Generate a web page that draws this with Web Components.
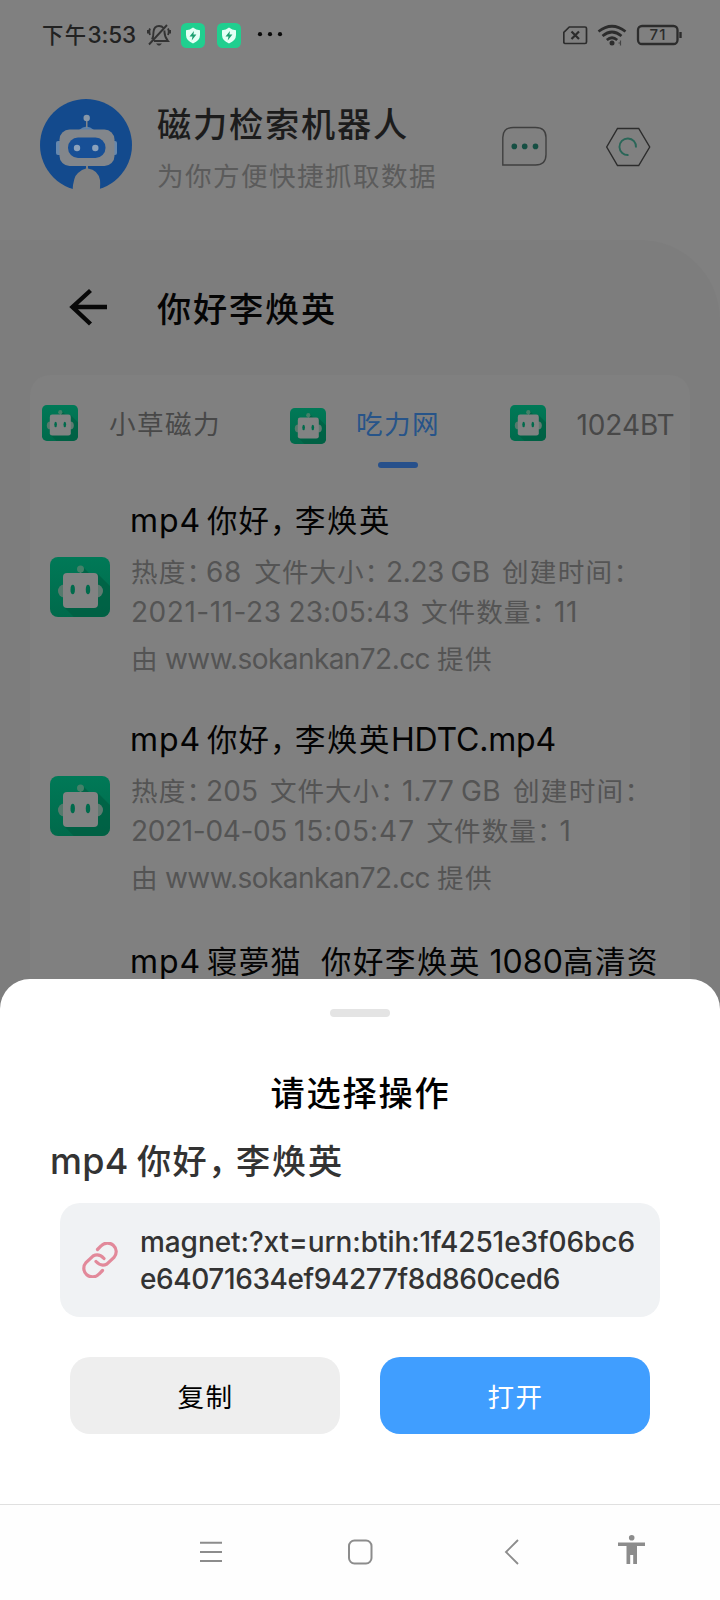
<!DOCTYPE html>
<html lang="zh-CN">
<head>
<meta charset="utf-8">
<title>磁力检索机器人</title>
<style>
html,body{margin:0;padding:0}
body{width:720px;height:1600px;overflow:hidden;background:#808080;font-family:Inter,"Noto Sans CJK SC",sans-serif}
</style>
</head>
<body>
<app-screen></app-screen>
<script>
function define(name, html, init){
  const t=document.createElement('template');
  t.innerHTML=html;
  customElements.define(name,class extends HTMLElement{
    constructor(){super();this.attachShadow({mode:'open'}).appendChild(t.content.cloneNode(true));}
    connectedCallback(){if(init)init(this);}
  });
}

define('app-screen',`<style>
:host{display:grid;width:720px;height:1600px;grid-template:1600px/720px;overflow:hidden}
.page,.front{grid-area:1/1;display:flex;flex-direction:column;min-width:0}
.front{justify-content:flex-end}
.page{overflow:hidden}
</style>
<div class="page"><status-bar></status-bar><app-header></app-header><result-panel></result-panel></div>
<div class="front"><action-sheet></action-sheet><nav-bar></nav-bar></div>`);

define('status-bar',`<style>
:host{display:flex;height:70px;box-sizing:border-box;padding:0 38px 0 42px;align-items:center;color:#222}
.time{font-size:22.5px;line-height:30px;font-weight:500;width:105px;white-space:nowrap;margin-bottom:2px}
svg{display:block;flex:none}
.bell{margin-right:10px}.g{margin-right:12px}.sp{flex:1}
</style>
<div class="time"><t-r c w="45.5">下午</t-r><t-r w="48.5">3:53</t-r></div>
<svg class="bell" width="24" height="24" viewBox="0 0 24 24" fill="none" stroke="#333" stroke-width="1.9"><path d="M5 16.5 Q6.5 14 6.5 9 Q7 3 12 3 Q15 3 16.500 5M17.500 7.500 Q17 13 21 18H7M2 21.500 20 2M3 5.500Q1.700 8.500 3 12M21 5.500Q22.500 8.500 21 12M0.800 7v3.500M23.200 7v3.500"/><path d="M9 20.500h6l-2 2h-2z" fill="#333" stroke="none"/></svg>
<shield-icon class="g"></shield-icon><shield-icon class="g"></shield-icon>
<svg width="30" height="10" viewBox="0 0 30 10" fill="#0c0c0c" style="margin-left:3px"><circle cx="4" cy="4.200" r="2.100"/><circle cx="14" cy="4.200" r="2.100"/><circle cx="24" cy="4.200" r="2.100"/></svg>
<div class="sp"></div>
<svg width="119" height="24" viewBox="0 0 119 24" fill="none" stroke="#2c2c2c"><path d="M6.300 4H22a1.500 1.500 0 0 1 1.500 1.500V19A1.500 1.500 0 0 1 22 20.500H2A1.500 1.500 0 0 1 .8 19V9.500z" stroke-width="1.700"/><path d="m8.500 8.500 7.500 7.500m0-7.500-7.500 7.500" stroke-width="2.200"/><path d="M35.500 8.500Q49-2 62.500 8.500M39.500 13Q49 5 58.500 13M43.800 17Q49 12.500 54.200 17" stroke-width="2.700"/><circle cx="49" cy="20" r="2.500" fill="#2c2c2c" stroke="none"/><path d="M57.500 17.500v5M55.500 20h2" stroke-width="1.200" opacity=".7"/><rect x="75" y="3" width="39.500" height="18" rx="4" stroke-width="2.300"/><path d="M117.500 9v6" stroke-width="2.400"/><text x="94.500" y="17.300" text-anchor="middle" font-family="Inter,sans-serif" font-size="15" font-weight="500" fill="#2c2c2c" stroke="none" textLength="16">71</text></svg>`);

define('shield-icon',`<style>:host{display:block}svg{display:block}</style>
<svg width="24" height="25" viewBox="0 0 24 25"><rect width="24" height="25" rx="5.500" fill="#20cf8f"/><path d="M12 4.500Q15 7 19 7.200V12Q19 17.500 12 20.500 5 17.500 5 12V7.200Q9 7 12 4.500Z" fill="#e4fff5"/><path d="m13 8-4.500 5.500h3l-.8 4 4.700-6h-3z" fill="#1c9f70"/></svg>`);

define('app-header',`<style>
:host{display:flex;height:170px;box-sizing:border-box;padding:29px 0 0 40px;align-items:flex-start}
svg{display:block;flex:none}
.names{margin-left:25px;width:345px;white-space:nowrap}
.t{font-size:36px;line-height:44px;margin-top:1px;color:#1c1c1c;font-weight:500}
.s{font-size:28px;line-height:36px;margin-top:11px;color:#5b5b5b}
</style>
<svg width="92" height="92" viewBox="0 0 92 92"><circle cx="46" cy="46" r="46" fill="#134a8d"/><g fill="#82868b"><path d="M32.500 93Q33 78 38 74 42 70 46 69.500L46 66h2v3.500Q58 71 60 81 60.500 87 59.500 93Z" fill="#808080"/><rect x="16" y="42" width="61" height="14" rx="2" fill="#6688ae"/><path d="M39 31Q46.500 24 54 31z" fill="#5a81ac"/><rect x="19.500" y="30.500" width="55" height="36.500" rx="10"/><path d="M46 19h1.500v10H46z"/><circle cx="46.700" cy="19" r="3.200" fill="#8797a8"/></g><rect x="28" y="38.500" width="37.500" height="20.500" rx="10" fill="#174f96"/><circle cx="37" cy="49" r="3.200" fill="#8ba1bb"/><circle cx="55.300" cy="49" r="3.200" fill="#8ba1bb"/></svg>
<div class="names"><div class="t"><t-r c w="252">磁力检索机器人</t-r></div><div class="s"><t-r c w="280">为你方便快捷抓取数据</t-r></div></div>
<svg width="150" height="42" viewBox="0 0 150 42" style="margin-top:26px" fill="none"><path d="M.8 40V12.500Q.8 2.500 11.500 2.500H33.500Q44 2.500 44 12.500V29.500Q44 40 33.500 40Z" stroke="#3f3f3f" stroke-width="1.400"/><g fill="#164f43"><circle cx="12.300" cy="21.400" r="2.800"/><circle cx="22.700" cy="21.400" r="2.800"/><circle cx="33.500" cy="21.400" r="2.800"/></g><path d="M115.500 3.500H136.700L147.700 22 136.700 40.500H115.500L104.700 22Z" stroke="#2c2c2c" stroke-width="1.400"/><path d="M134 22.500A8.300 8.300 0 1 0 126.500 30" stroke="#2a6658" stroke-width="1.900"/></svg>`);

define('robot-icon',`<style>:host{display:block;width:60px;height:60px;flex:none}svg{display:block;width:100%;height:100%}</style>
<svg viewBox="0 0 60 60"><defs><linearGradient id="g" x2="0" y2="1"><stop stop-color="#007957"/><stop offset="1" stop-color="#006a4b"/></linearGradient><clipPath id="c"><rect width="60" height="60" rx="8"/></clipPath></defs><g clip-path="url(#c)"><rect width="60" height="60" fill="url(#g)"/><path d="m33 10 6 6 9 1 12 12v31H24l-9-9z" fill="#005c41" opacity=".65"/><ellipse cx="14" cy="34" rx="6" ry="6.500" fill="#55796c"/><ellipse cx="47" cy="34" rx="6" ry="6.500" fill="#5f7a71"/><path d="M29.800 12h1.500v5h-1.500z" fill="#4c7f6b"/><circle cx="30.500" cy="12" r="3.500" fill="#458069"/><rect x="13" y="16" width="35" height="35" rx="4" fill="#828383"/><ellipse cx="22.700" cy="32.500" rx="2.200" ry="4.700" fill="#006b4c"/><ellipse cx="38" cy="32.500" rx="2.200" ry="4.700" fill="#006b4c"/></g></svg>`);

define('result-panel',`<style>
:host{display:block;flex:1;background:#7d7d7d;border-radius:0 80px 0 0;overflow:hidden}
.head{display:flex;align-items:center;height:135px;padding-left:68px}
.head svg{display:block;margin-right:46px;margin-bottom:2px}
h1{margin:0;font-size:36px;line-height:44px;font-weight:500;color:#050505;white-space:nowrap}
.card{margin:0 30px;height:900px;background:#808080;border-radius:20px;overflow:hidden}
.tabs{display:flex;height:112px;align-items:flex-start;padding:27px 0 0 12px;box-sizing:border-box;white-space:nowrap;font-size:28px;line-height:40px;color:#484848}
robot-icon.i{width:36px;height:36px;margin-top:3px}
.tab{margin-left:31px;padding-top:1px}
.on{color:#275489;width:84px;display:flex;flex-direction:column;align-items:center}
.on i{width:40px;height:6px;border-radius:3px;background:#27508b;margin-top:18px}
.on>div{margin-left:0}
</style>
<div class="head"><svg width="43" height="42" viewBox="0 0 43 42" fill="none" stroke="#080808" stroke-width="4.400"><path d="M22.500 4.500 4.500 21 22.500 38M5 21H39"/></svg><h1><t-r c w="180">你好李焕英</t-r></h1></div>
<div class="card">
<div class="tabs"><robot-icon class="i"></robot-icon><div class="tab" style="width:181px"><t-r c w="112">小草磁力</t-r></div><robot-icon class="i" style="margin-top:6px"></robot-icon><div class="tab on" style="width:82px"><div><t-r c w="84">吃力网</t-r></div><i></i></div><robot-icon class="i" style="margin-left:71px"></robot-icon><div class="tab" style="margin-left:30.500px;padding-top:2.500px"><t-r w="98">1024BT</t-r></div></div>
<result-item>
<span slot="title"><t-r w="71">mp4</t-r><t-r w="6"> </t-r><t-r c w="63">你好</t-r><t-r c w="25">，</t-r><t-r c w="96">李焕英</t-r></span>
<span slot="a"><t-r c w="55.500">热度</t-r><t-r c w="19.500">：</t-r><t-r w="36">68</t-r><t-r w="12.500"> </t-r><t-r c w="110">文件大小</t-r><t-r c w="21.500">：</t-r><t-r w="58">2.23</t-r><t-r w="6.500"> </t-r><t-r w="40">GB</t-r><t-r w="11.500"> </t-r><t-r c w="111.500">创建时间</t-r><t-r c w="21.500">：</t-r></span>
<span slot="b"><t-r w="150.500">2021-11-23</t-r><t-r w="7"> </t-r><t-r w="121">23:05:43</t-r><t-r w="11.500"> </t-r><t-r c w="110.500">文件数量</t-r><t-r c w="22.500">：</t-r><t-r w="24">11</t-r></span>
</result-item>
<result-item>
<span slot="title"><t-r w="71">mp4</t-r><t-r w="6"> </t-r><t-r c w="63">你好</t-r><t-r c w="25">，</t-r><t-r c w="96">李焕英</t-r><t-r w="165">HDTC.mp4</t-r></span>
<span slot="a"><t-r c w="55.500">热度</t-r><t-r c w="19.500">：</t-r><t-r w="52">205</t-r><t-r w="12"> </t-r><t-r c w="110">文件大小</t-r><t-r c w="22">：</t-r><t-r w="52">1.77</t-r><t-r w="7"> </t-r><t-r w="40">GB</t-r><t-r w="12"> </t-r><t-r c w="111.500">创建时间</t-r><t-r c w="21.500">：</t-r></span>
<span slot="b"><t-r w="156">2021-04-05</t-r><t-r w="7"> </t-r><t-r w="121">15:05:47</t-r><t-r w="11.500"> </t-r><t-r c w="110.500">文件数量</t-r><t-r c w="22.500">：</t-r><t-r w="13">1</t-r></span>
</result-item>
<result-item brief>
<span slot="title"><t-r w="71">mp4</t-r><t-r w="6"> </t-r><t-r c w="95">寝夢猫</t-r><t-r w="19"> </t-r><t-r c w="160">你好李焕英</t-r><t-r w="8.500"> </t-r><t-r w="73.500">1080</t-r><t-r c w="96">高清资</t-r></span>
</result-item>
</div>`);

define('result-item',`<style>
:host{display:flex;height:219px;padding-left:20px;white-space:nowrap}
:host([brief]){padding-top:3px}
:host([brief]) .p{display:none}
robot-icon{margin-top:70px;margin-right:20px}
.t{font-size:32px;line-height:42px;margin-top:11px;margin-left:-1px;color:#030303}
.m{font-size:28px;line-height:40px;color:#545454;margin-top:9px}
.p{font-size:28px;line-height:40px;color:#545454;margin-top:6.500px}
.m div{height:40px}
.body{padding-left:1px}
</style>
<robot-icon></robot-icon><div class="body"><div class="t"><slot name="title"></slot></div><div class="m"><div><slot name="a"></slot></div><div><slot name="b"></slot></div></div><div class="p"><t-r c w="28">由</t-r><t-r w="6"> </t-r><t-r w="265">www.sokankan72.cc</t-r><t-r w="7"> </t-r><t-r c w="56">提供</t-r></div></div>`);

define('action-sheet',`<style>
:host{display:flex;flex-direction:column;height:525px;background:#fff;border-radius:30px 30px 0 0;white-space:nowrap}
.handle{width:60px;height:8px;border-radius:4px;background:#e4e4e4;margin:30px auto 0}
.t{font-size:36px;line-height:46px;font-weight:500;color:#000;text-align:center;margin:51px 0 0 1px}
.n{font-size:36px;line-height:46px;font-weight:500;color:#333;margin:20px 0 0 50px}
.link{display:flex;align-items:center;box-sizing:border-box;width:600px;height:114px;margin:19px 60px 0;padding-left:22px;background:#f0f2f4;border-radius:20px;color:#333;font-size:28px;line-height:37px;font-weight:500}
.link svg{display:block;margin-right:22px}
.link>div{padding-top:2px}
.link div div{height:37px}
.btns{display:flex;gap:40px;margin:40px 70px 0}
</style>
<div class="handle"></div>
<div class="t"><t-r c w="180">请选择操作</t-r></div>
<div class="n"><t-r w="78.500">mp4</t-r><t-r w="8.500"> </t-r><t-r c w="71">你好</t-r><t-r c w="28">，</t-r><t-r c w="108">李焕英</t-r></div>
<div class="link"><svg width="36" height="36" viewBox="0 0 36 36" fill="none" stroke="#e2899a" stroke-width="3.200" stroke-linecap="round"><path d="M15.500 7.500 19 4A8.300 8.300 0 0 1 32 15.500L25 22Q19 25 14 19.500"/><path d="M20.500 28.500 17 32A8.300 8.300 0 0 1 4 20.500L11 14Q17 11 22 16.500"/></svg><div><div><t-r w="495">magnet:?xt=urn:btih:1f4251e3f06bc6</t-r></div><div><t-r w="420">e64071634ef94277f8d860ced6</t-r></div></div></div>
<div class="btns"><sheet-button><t-r c w="56">复制</t-r></sheet-button><sheet-button style="--bg:#409eff;--fg:#fff"><t-r c w="56">打开</t-r></sheet-button></div>`);

define('sheet-button',`<style>
:host{display:flex;align-items:center;justify-content:center;box-sizing:border-box;padding-left:1px;width:270px;height:77px;border-radius:20px;background:var(--bg,#eee);color:var(--fg,#000);font-size:28px;line-height:40px}
</style><slot></slot>`);

define('nav-bar',`<style>
:host{display:flex;box-sizing:border-box;height:96px;border-top:1px solid #e0e0e0;background:#fefefe;padding:29px 0 0 199px}
svg{display:block;flex:none}
</style>
<svg width="24" height="34" viewBox="0 0 24 34" stroke="#8c8c8c" stroke-width="2"><path d="M1 8.700h22M1 18h22M1 27h22"/></svg>
<svg width="26" height="34" viewBox="0 0 26 34" style="margin-left:124px" fill="none" stroke="#8c8c8c" stroke-width="2"><rect x="2" y="6.500" width="22.500" height="23" rx="5.500"/></svg>
<svg width="16" height="34" viewBox="0 0 16 34" style="margin-left:131px" fill="none" stroke="#8c8c8c" stroke-width="1.900"><path d="M14 6 2 18 14 30"/></svg>
<svg width="30" height="34" viewBox="0 0 30 34" style="margin-left:97px" fill="#8c8c8c"><circle cx="14.700" cy="3.800" r="2.800"/><path d="M1 8.500H28V12H20V30H16.200V21H13.200V30H9.500V12H1Z"/></svg>`);

/* Text run: spreads its glyphs evenly over the advance width given by w; c marks Chinese text. */
define('t-r',`<style>:host{display:inline;white-space:pre}:host([c]){font-family:"Noto Sans CJK SC",sans-serif;font-size:.95em}</style><slot></slot>`,el=>{
  const n=[...el.textContent].length,w=parseFloat(el.getAttribute('w'));
  el.style.letterSpacing='0px';
  const r=document.createRange();r.selectNodeContents(el);
  el.style.letterSpacing=((w-r.getBoundingClientRect().width)/n)+'px';
});
</script>
</body>
</html>
